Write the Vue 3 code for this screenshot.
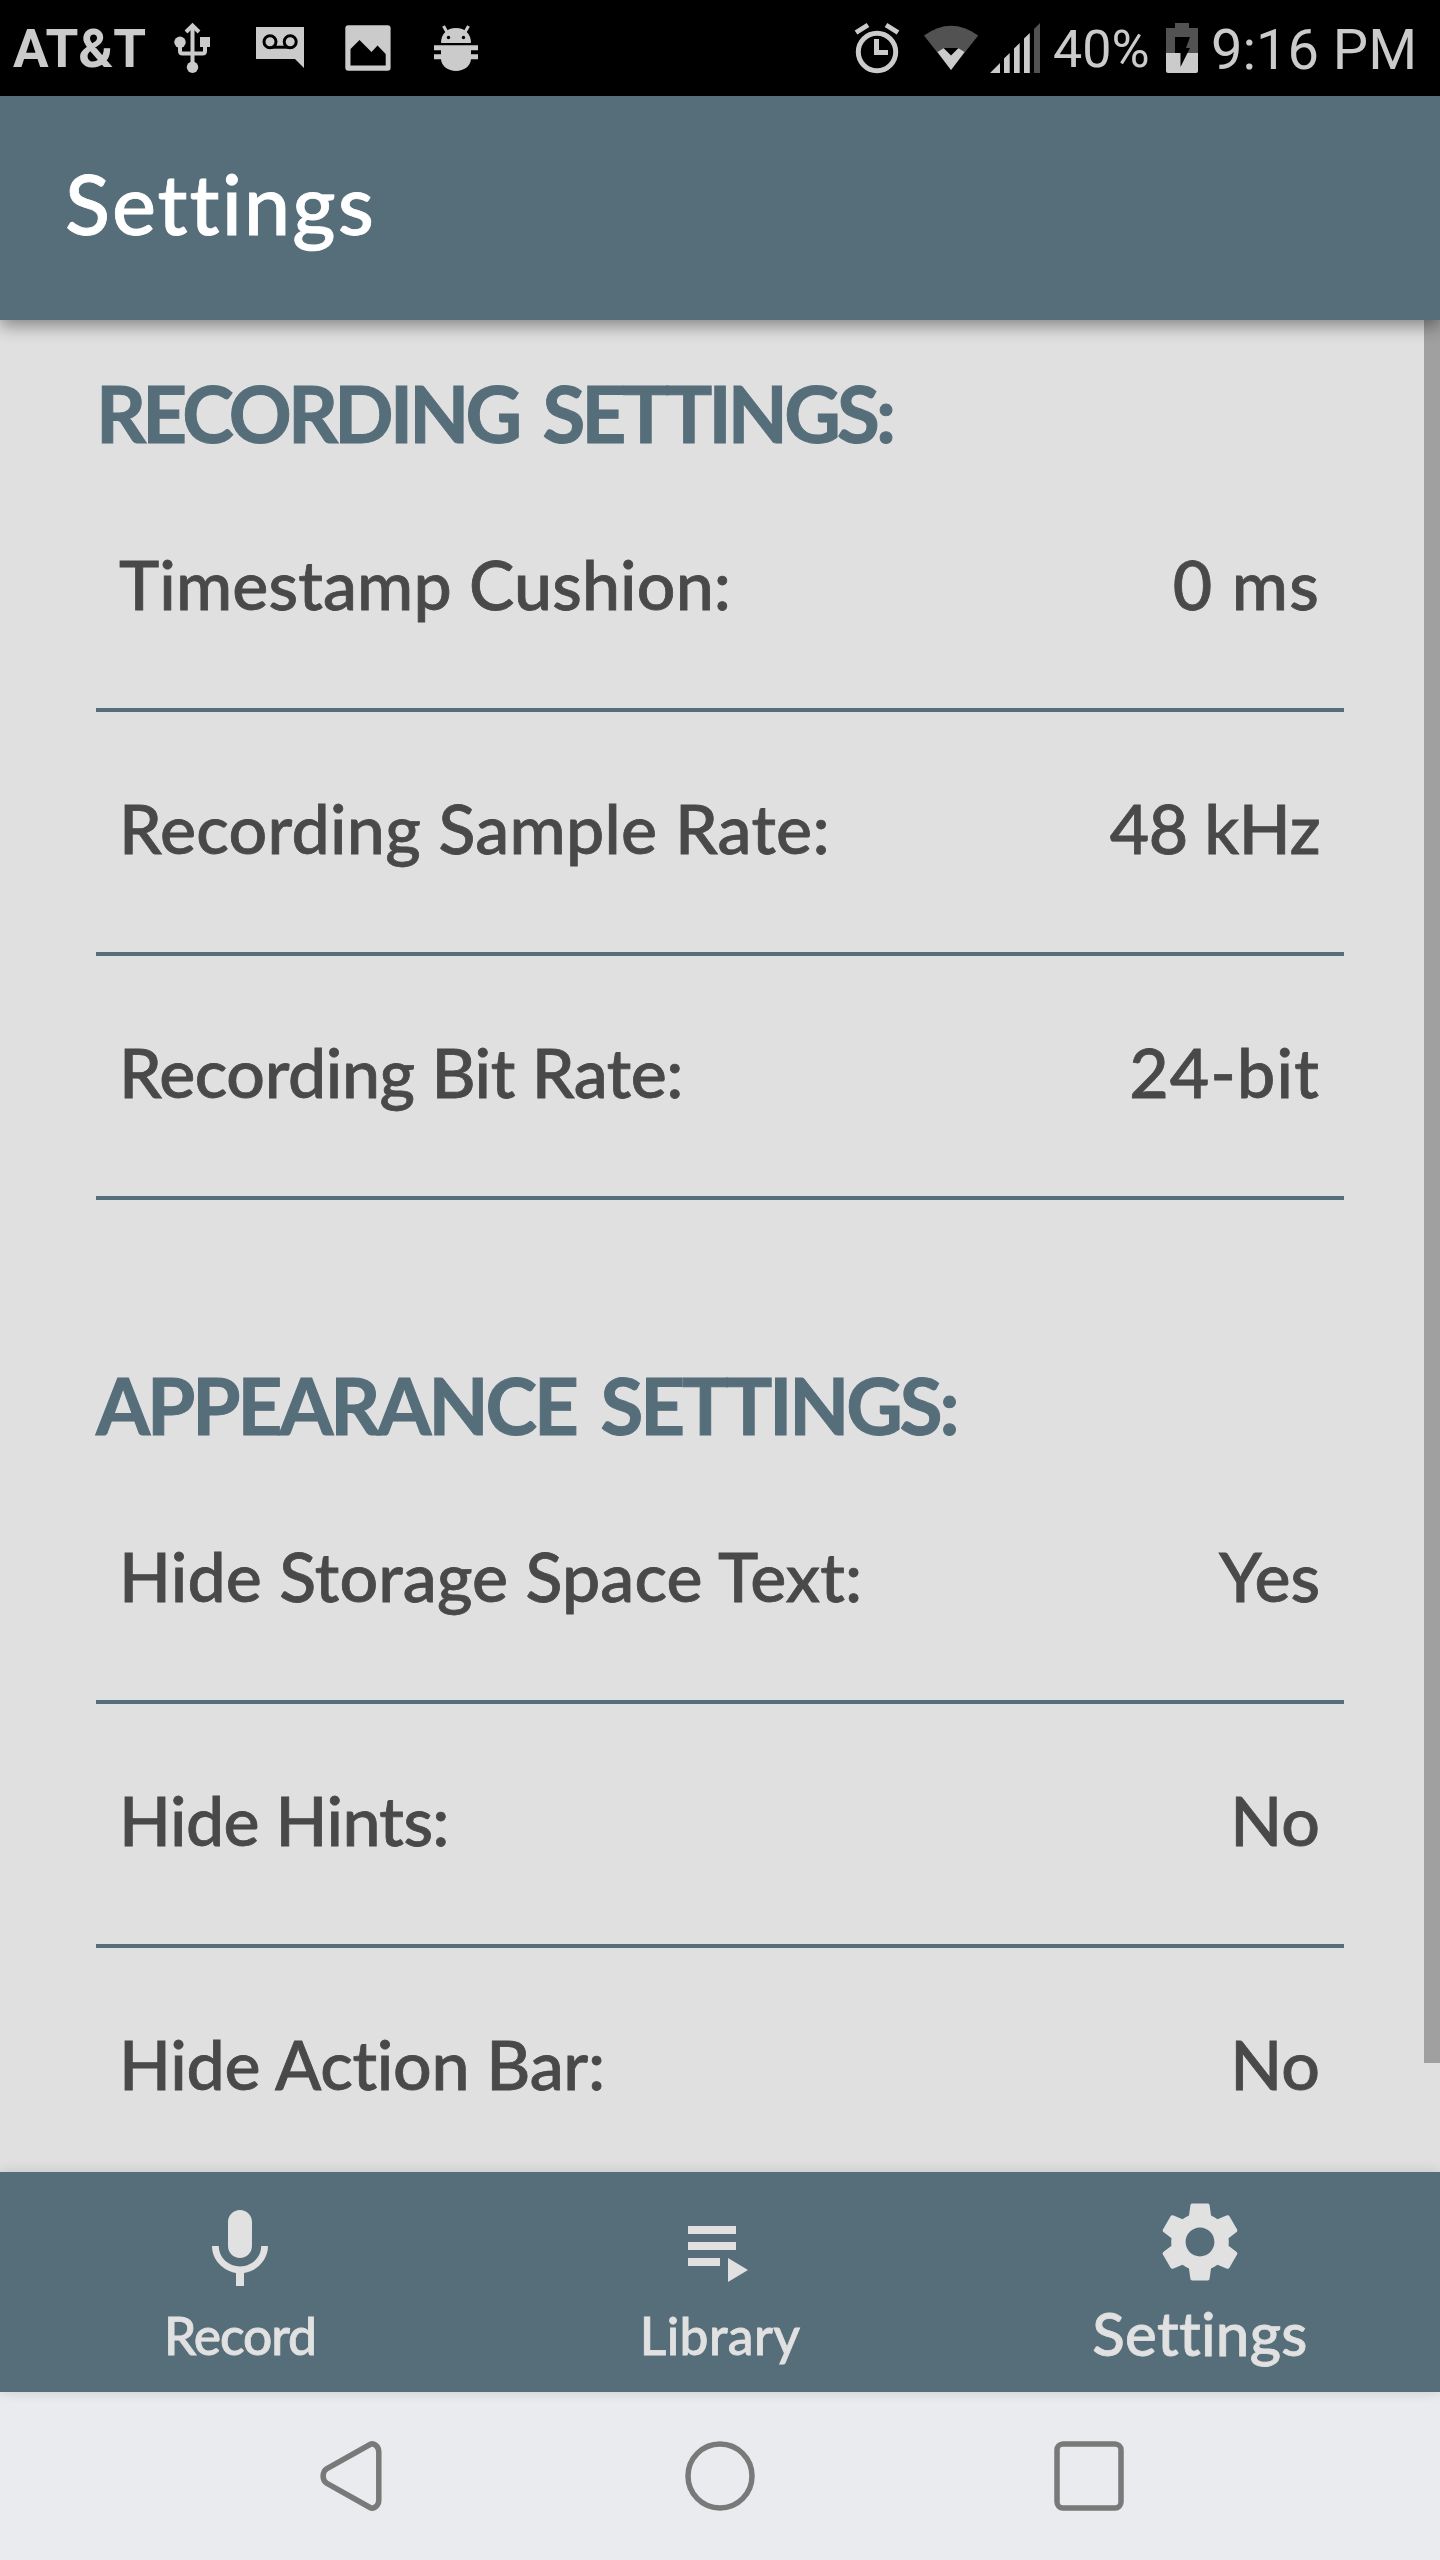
<template>
  <div class="screen">
    <!-- status bar -->
    <div class="status-bar">
      <span class="carrier">AT&amp;T</span>
      <svg width="68" height="96" viewBox="164 0 68 96">
        <path d="M192.500 27v38M180 46v5q0 2.500 2.500 2.500h20q2.500 0 2.500-2.500v-5" class="line" />
        <path d="M186 32l6.500-6.500 6.500 6.500" class="line" />
        <circle cx="192.500" cy="67.300" r="5.700" />
        <circle cx="180" cy="42.300" r="5.700" />
        <rect x="200" y="37" width="10" height="10" />
      </svg>
      <svg width="92" height="96" viewBox="232 0 92 96">
        <path d="M256 27h48v41l-9-9h-39z" />
        <rect x="270" y="45.700" width="20" height="3" class="hole" />
        <circle cx="270" cy="41.700" r="6" class="ring" />
        <circle cx="290.200" cy="41.700" r="6" class="ring" />
      </svg>
      <svg width="88" height="96" viewBox="324 0 88 96">
        <rect x="345.300" y="25.300" width="45.300" height="45.500" rx="3" />
        <path d="M350.500 65.500V49l9-9 12 12 6-6.500 8.200 8.500v11.500z" class="hole" />
      </svg>
      <svg width="88" height="96" viewBox="412 0 88 96">
        <path d="M441 43c0-9 6-15 15-15s15 6 15 15z" />
        <path d="M443.500 26l4 7M468.500 26l-4 7" class="line thin" />
        <circle cx="448.500" cy="37.500" r="1.700" class="hole" />
        <circle cx="463.500" cy="37.500" r="1.700" class="hole" />
        <path d="M434 45.300h44v5h-7v4h7v5h-7c-.5 7-7 11.700-15 11.700s-14.500-4.700-15-11.700h-7v-5h7v-4h-7z" />
      </svg>
      <div class="spacer"></div>
      <svg width="70" height="96" viewBox="840 0 70 96">
        <circle cx="877" cy="52" r="18.700" class="line alarm" />
        <path d="M876.500 39v13.500h11.500" class="line alarm" />
        <path d="M856 32.500l12-7.500M898 32.500l-12-7.500" class="line alarm" />
      </svg>
      <svg width="74" height="96" viewBox="910 0 74 96">
        <path d="M924 35.500Q951 16 978.200 35.500L951 70z" class="dim" />
        <path d="M937.500 52l6.500-4h14l6.500 4L951 70z" />
        <path d="M943.500 48h15l-7.500 7.500z" class="hole" />
      </svg>
      <svg width="62" height="96" viewBox="984 0 62 96">
        <path d="M990 73l10-10v10zM1004 73V58.500l5.700-5.500v20zM1014 73V48.500l5.700-5.500v30zM1024 73V38.500l5.800-5.500v40z" />
        <path d="M1034 73V29l6-6v50z" class="dim" />
      </svg>
      <span class="percent">40%</span>
      <svg width="44" height="96" viewBox="1160 0 44 96">
        <path d="M1166 53V28h9v-5h14v5h9v25z" class="dim" />
        <path d="M1166 53h32v18q0 2-2 2h-28q-2 0-2-2z" />
        <path d="M1175 37h15l-4 11h4l-9.500 19V53H1175z" class="hole" />
      </svg>
      <span class="clock">9:16 PM</span>
    </div>

    <header class="app-bar">Settings</header>

    <main class="content">
      <section v-for="group in groups" :key="group.title" class="group">
        <h2 class="group-title" :style="{ letterSpacing: group.spacing + 'px' }">{{ group.title }}</h2>
        <div v-for="row in group.rows" :key="row.label" class="row">
          <span :style="{ letterSpacing: row.spacing + 'px' }">{{ row.label }}</span>
          <span :style="{ letterSpacing: row.valueSpacing + 'px' }">{{ row.value }}</span>
        </div>
      </section>
      <div class="scrollbar"></div>
    </main>

    <nav class="tabs">
      <div v-for="tab in tabs" :key="tab.name" class="tab" :class="{ active: tab.active }">
        <svg width="96" height="96" viewBox="0 0 24 24"><path :d="tab.icon" /></svg>
        <span :style="{ letterSpacing: tab.spacing + 'px' }">{{ tab.name }}</span>
      </div>
    </nav>

    <footer class="system-nav">
      <svg width="1440" height="168" viewBox="0 0 1440 168">
        <path d="M370 52.500C373.500 50.500 378.800 54 378.800 60v48C378.800 114 373.500 117.500 370 115.500L327 91.500Q323.100 89 323.100 84T327 76.500z" />
        <circle cx="720" cy="84" r="32" />
        <rect x="1057" y="52" width="64" height="64" rx="6" />
      </svg>
    </footer>
  </div>
</template>

<script setup>
// spacing values are the tracking of each string, in px
const groups = [
  {
    title: 'RECORDING SETTINGS:',
    spacing: -3.8,
    rows: [
      { label: 'Timestamp Cushion:', spacing: 0.15, value: '0 ms', valueSpacing: 1.2 },
      { label: 'Recording Sample Rate:', spacing: 0.3, value: '48 kHz', valueSpacing: -0.5 },
      { label: 'Recording Bit Rate:', spacing: -0.4, value: '24-bit', valueSpacing: 1.2 }
    ]
  },
  {
    title: 'APPEARANCE SETTINGS:',
    spacing: -3.1,
    rows: [
      { label: 'Hide Storage Space Text:', spacing: 0.15, value: 'Yes', valueSpacing: 0 },
      { label: 'Hide Hints:', spacing: -0.6, value: 'No', valueSpacing: 0 },
      { label: 'Hide Action Bar:', spacing: -0.25, value: 'No', valueSpacing: 0 }
    ]
  }
]

const tabs = [
  {
    name: 'Record',
    spacing: -1.1,
    icon: 'M12 14c1.66 0 2.99-1.34 2.99-3L15 5c0-1.66-1.34-3-3-3S9 3.34 9 5v6c0 1.66 1.34 3 3 3zm5.3-3c0 3-2.54 5.1-5.3 5.1S6.7 14 6.7 11H5c0 3.41 2.72 6.23 6 6.72V21h2v-3.28c3.28-.48 6-3.3 6-6.72h-1.7z'
  },
  {
    name: 'Library',
    spacing: 0.4,
    icon: 'M4 10h12v2H4zM4 6h12v2H4zM4 14h8v2H4zM14 14v6l5-3z'
  },
  {
    name: 'Settings',
    spacing: 0.3,
    active: true,
    icon: 'M19.14 12.94c.04-.3.06-.61.06-.94 0-.32-.02-.64-.07-.94l2.03-1.58c.18-.14.23-.41.12-.61l-1.92-3.32c-.12-.22-.37-.29-.59-.22l-2.39.96c-.5-.38-1.03-.7-1.62-.94L14.4 2.81c-.04-.24-.24-.41-.48-.41h-3.84c-.24 0-.43.17-.47.41L9.25 5.35C8.66 5.59 8.12 5.92 7.63 6.29L5.24 5.33c-.22-.08-.47 0-.59.22L2.74 8.87C2.62 9.08 2.66 9.34 2.86 9.48l2.03 1.58C4.84 11.36 4.8 11.69 4.8 12s.02.64.07.94l-2.03 1.58c-.18.14-.23.41-.12.61l1.92 3.32c.12.22.37.29.59.22l2.39-.96c.5.38 1.03.7 1.62.94l.36 2.54c.05.24.24.41.48.41h3.84c.24 0 .44-.17.47-.41l.36-2.54c.59-.24 1.13-.56 1.62-.94l2.39.96c.22.08.47 0 .59-.22l1.92-3.32c.12-.22.07-.47-.12-.61L19.14 12.94zM12 15.6c-1.98 0-3.6-1.62-3.6-3.6s1.62-3.6 3.6-3.6 3.6 1.62 3.6 3.6-1.62 3.6-3.6 3.6z'
  }
]
</script>

<style scoped>
.screen {
  width: 1440px;
  height: 2560px;
  display: flex;
  flex-direction: column;
  overflow: hidden;
  background: #e0e0e0;
  font-family: Lato, sans-serif;
  font-weight: 500;
  font-variant-ligatures: none;
}

.status-bar {
  height: 96px;
  display: flex;
  flex-shrink: 0;
  background: #000;
  color: #cbcbcb;
  font-family: Roboto, sans-serif;
  font-weight: 400;
  line-height: 99px;
  white-space: nowrap;
}

.status-bar svg {
  fill: #cbcbcb;
  flex-shrink: 0;
}

.status-bar .line {
  fill: none;
  stroke: #cbcbcb;
  stroke-width: 4;
}

.status-bar .thin {
  stroke-width: 3;
}

.status-bar .alarm {
  stroke-width: 5;
}

.status-bar .hole {
  fill: #000;
}

.status-bar .ring {
  fill: #cbcbcb;
  stroke: #000;
  stroke-width: 3;
}

.status-bar .dim {
  fill: #525252;
}

.carrier {
  width: 151px;
  padding-left: 13px;
  font-size: 53px;
  font-weight: 700;
}

.spacer {
  flex: 1;
}

.percent {
  width: 107px;
  padding-left: 7px;
  font-size: 52px;
}

.clock {
  width: 229px;
  padding-left: 7px;
  font-size: 56px;
  line-height: 101px;
}

.app-bar {
  height: 224px;
  flex-shrink: 0;
  box-sizing: border-box;
  padding-left: 65px;
  background: #566e7a;
  color: #fff;
  font-size: 83px;
  line-height: 214px;
  letter-spacing: 2px;
  -webkit-text-stroke: 0.8px #fff;
  box-shadow: 0 6px 16px rgba(0, 0, 0, 0.4);
  z-index: 1;
}

.content {
  position: relative;
  height: 1852px;
  flex-shrink: 0;
  box-sizing: border-box;
  padding: 36px 96px 0;
  overflow: hidden;
}

.group {
  height: 992px;
}

.group-title {
  height: 112px;
  margin: 0;
  color: #566e7a;
  font-size: 78px;
  font-weight: 700;
  line-height: 114px;
  word-spacing: 9px;
  white-space: nowrap;
  -webkit-text-stroke: 1px #566e7a;
}

.row {
  height: 244px;
  box-sizing: border-box;
  display: flex;
  justify-content: space-between;
  padding: 0 24px 0 23px;
  border-bottom: 4px solid #566e7a;
  color: #494949;
  font-size: 68px;
  line-height: 232px;
  white-space: nowrap;
  -webkit-text-stroke: 0.8px #494949;
}

.scrollbar {
  position: absolute;
  top: 0;
  right: 0;
  width: 16px;
  height: 1743px;
  background: #a0a0a0;
}

.tabs {
  height: 220px;
  flex-shrink: 0;
  display: flex;
  background: #566e7a;
  color: #e1e1e1;
  box-shadow: 0 0 12px rgba(0, 0, 0, 0.14);
  z-index: 1;
}

.tab {
  flex: 1;
  box-sizing: border-box;
  padding-top: 30px;
  display: flex;
  flex-direction: column;
  align-items: center;
  font-size: 51.5px;
  line-height: 74px;
  -webkit-text-stroke: 0.8px #e1e1e1;
}

.tab svg {
  fill: #e1e1e1;
}

.tab.active {
  padding-top: 22px;
  font-size: 60px;
  line-height: 86px;
}

.system-nav {
  height: 168px;
  flex-shrink: 0;
  background: #e9ebee;
}

.system-nav svg {
  display: block;
  fill: none;
  stroke: #777a78;
  stroke-width: 5.5;
}
</style>

<style>
body {
  margin: 0;
}
</style>
